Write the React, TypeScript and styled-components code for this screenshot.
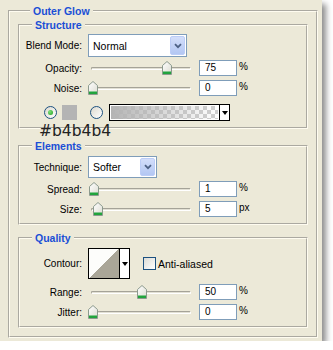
import styled, { createGlobalStyle } from 'styled-components'

const GlobalStyle = createGlobalStyle`
    * {
        margin: 0;
        padding: 0;
        box-sizing: border-box;
    }
    body {
        background: #fff;
        font-family: "Liberation Sans", Arial, sans-serif;
        font-size: 10px;
        color: #000;
    }
`

type SliderProps = { label: string; value: number; unit: string; mt: number }

function Thumb() {
    return (
        <svg width="10" height="14" viewBox="0 0 10 14">
            <defs>
                <linearGradient id="thumbFill" x1="0" y1="0" x2="1" y2="1">
                    <stop offset="0" stopColor="#ffffff" />
                    <stop offset="1" stopColor="#dcdcd2" />
                </linearGradient>
            </defs>
            <path d="M0.5 13.5 V4.5 L5 0.5 L9.5 4.5 V13.5 Z" fill="url(#thumbFill)" stroke="#8c9a8e" />
            <rect x="1" y="10.5" width="8" height="2.5" fill="#21a43d" />
        </svg>
    )
}

function SliderRow({ label, value, unit, mt }: SliderProps) {
    return (
        <Row $mt={mt}>
            <Label>{label}</Label>
            <Slider>
                <Track />
                <ThumbWrap style={{ left: Math.round(value * 0.987) }}>
                    <Thumb />
                </ThumbWrap>
            </Slider>
            <NumberBox>{value}</NumberBox>
            <Unit>{unit}</Unit>
        </Row>
    )
}

function Chevron() {
    return (
        <svg width="8" height="6" viewBox="0 0 8 6">
            <path d="M1 1.2 L4 4.2 L7 1.2" fill="none" stroke="#4d6185" strokeWidth="1.8" />
        </svg>
    )
}

function App() {
    return (
        <>
            <GlobalStyle />
            <Panel>
                <Group $outer>
                    <Legend>Outer Glow</Legend>
                    <Group $mt={7}>
                        <Legend>Structure</Legend>
                        <Body $pt={3} $pb={6}>
                            <Row $mt={0}>
                                <Label>Blend Mode:</Label>
                                <Combo $w={99} $h={23}>
                                    <ComboText>Normal</ComboText>
                                    <ComboButton><Chevron /></ComboButton>
                                </Combo>
                            </Row>
                            <SliderRow label="Opacity:" value={75} unit="%" mt={3} />
                            <SliderRow label="Noise:" value={0} unit="%" mt={4} />
                            <ColorRow>
                                <Radio $checked />
                                <Swatch />
                                <Radio />
                                <GradientBox>
                                    <GradientStrip />
                                    <ArrowPart><Triangle /></ArrowPart>
                                </GradientBox>
                            </ColorRow>
                        </Body>
                    </Group>
                    <Group $mt={16}>
                        <Legend>Elements</Legend>
                        <Body $pt={4} $pb={6}>
                            <Row $mt={0}>
                                <Label>Technique:</Label>
                                <Combo $w={69} $h={22}>
                                    <ComboText>Softer</ComboText>
                                    <ComboButton><Chevron /></ComboButton>
                                </Combo>
                            </Row>
                            <SliderRow label="Spread:" value={1} unit="%" mt={3} />
                            <SliderRow label="Size:" value={5} unit="px" mt={4} />
                        </Body>
                    </Group>
                    <Group $mt={12}>
                        <Legend>Quality</Legend>
                        <Body $pt={4} $pb={6}>
                            <Row $mt={0}>
                                <Label>Contour:</Label>
                                <ContourBox>
                                    <ContourPic />
                                    <ArrowPart><Triangle /></ArrowPart>
                                </ContourBox>
                                <Check />
                                <CheckLabel>Anti-aliased</CheckLabel>
                            </Row>
                            <SliderRow label="Range:" value={50} unit="%" mt={5} />
                            <SliderRow label="Jitter:" value={0} unit="%" mt={4} />
                        </Body>
                    </Group>
                </Group>
                <HexNote>#b4b4b4</HexNote>
            </Panel>
        </>
    )
}
export default App

const Panel = styled.div`
    position: relative;
    width: 322px;
    height: 341px;
    padding: 10px 4px 1px 8px;
    background: #ece9d8;
    box-shadow: 4px 4px 6px rgba(0, 0, 0, 0.45);
`
const Group = styled.div<{ $outer?: boolean; $mt?: number }>`
    display: flex;
    flex-direction: column;
    margin-top: ${(p) => p.$mt || 0}px;
    padding: ${(p) => (p.$outer ? '0 8px 8px 8px' : '0')};
    border: 2px groove rgb(255, 252, 240);
`
const Legend = styled.div`
    align-self: flex-start;
    margin: -7px 0 0 12px;
    padding: 0 3px;
    height: 12px;
    line-height: 12px;
    font-size: 10.5px;
    font-weight: bold;
    color: #1a4fd6;
    background: #ece9d8;
`
const Body = styled.div<{ $pt: number; $pb: number }>`
    display: flex;
    flex-direction: column;
    padding: ${(p) => p.$pt}px 0 ${(p) => p.$pb}px 0;
`
const Row = styled.div<{ $mt: number }>`
    display: flex;
    align-items: center;
    margin-top: ${(p) => p.$mt}px;
`
const Label = styled.div`
    width: 62px;
    margin-right: 6px;
    text-align: right;
    white-space: nowrap;
`
const Combo = styled.div<{ $w: number; $h: number }>`
    display: flex;
    width: ${(p) => p.$w}px;
    height: ${(p) => p.$h}px;
    padding: 1px;
    border: 1px solid #7f9db9;
    background: #fff;
`
const ComboText = styled.div`
    flex: 1;
    display: flex;
    align-items: center;
    padding-left: 3px;
    font-size: 10.5px;
`
const ComboButton = styled.div`
    width: 15px;
    display: flex;
    align-items: center;
    justify-content: center;
    border: 1px solid #bccdf7;
    border-radius: 2px;
    background: linear-gradient(#d3defa, #b3c7f3);
`
const Slider = styled.div`
    position: relative;
    width: 108px;
    height: 16px;
    margin-right: 3px;
`
const Track = styled.div`
    position: absolute;
    left: 3px;
    right: 5px;
    top: 7px;
    height: 3px;
    border-radius: 2px;
    border-top: 1px solid #a5a398;
    border-left: 1px solid #a5a398;
    border-bottom: 1px solid #fff;
    border-right: 1px solid #fff;
    background: #e2e0d4;
`
const ThumbWrap = styled.div`
    position: absolute;
    top: 1px;
    display: flex;
`
const NumberBox = styled.div`
    width: 38px;
    height: 16px;
    padding-left: 5px;
    line-height: 14px;
    border: 1px solid #7f9db9;
    background: #fff;
    margin-right: 2px;
`
const Unit = styled.div`
    line-height: 14px;
    align-self: flex-start;
`
const ColorRow = styled.div`
    display: flex;
    align-items: center;
    height: 17px;
    margin-top: 8px;
    padding-left: 24px;
`
const Radio = styled.div<{ $checked?: boolean }>`
    width: 13px;
    height: 13px;
    border-radius: 50%;
    border: 1px solid #1c5180;
    background: linear-gradient(135deg, #dcd9ce, #ffffff);
    display: flex;
    align-items: center;
    justify-content: center;
    margin-right: ${(p) => (p.$checked ? 5 : 6)}px;
    &::after {
        content: '';
        display: ${(p) => (p.$checked ? 'block' : 'none')};
        width: 5px;
        height: 5px;
        border-radius: 50%;
        background: radial-gradient(circle at 35% 35%, #7de07a, #1f9f1f);
    }
`
const Swatch = styled.div`
    width: 15px;
    height: 15px;
    background: #b4b4b4;
    margin-right: 13px;
`
const GradientBox = styled.div`
    display: flex;
    width: 121px;
    height: 17px;
    border: 1px solid #000;
`
const GradientStrip = styled.div`
    flex: 1;
    border: 1px solid #fff;
    background-image: linear-gradient(to right, #b4b4b4, rgba(180, 180, 180, 0)),
        conic-gradient(#cfcfcf 25%, #fff 0 50%, #cfcfcf 0 75%, #fff 0);
    background-size: 100% 100%, 8px 8px;
`
const ArrowPart = styled.div`
    width: 10px;
    display: flex;
    align-items: center;
    justify-content: center;
    border-left: 1px solid #000;
    background: #fff;
`
const Triangle = styled.div`
    width: 0;
    height: 0;
    border-left: 3px solid transparent;
    border-right: 3px solid transparent;
    border-top: 4px solid #000;
`
const ContourBox = styled.div`
    display: flex;
    width: 42px;
    height: 31px;
    border: 1px solid #000;
    margin-right: 13px;
`
const ContourPic = styled.div`
    flex: 1;
    background: linear-gradient(to top left, #aaa698 50%, #fdfdfb 50%);
`
const Check = styled.div`
    width: 13px;
    height: 13px;
    border: 1px solid #1c5180;
    background: linear-gradient(135deg, #dcdcd6, #ffffff);
    margin-right: 2px;
`
const CheckLabel = styled.div`
    font-size: 10.5px;
`
const HexNote = styled.div`
    position: absolute;
    left: 39px;
    top: 122px;
    font-family: "DejaVu Sans", Verdana, sans-serif;
    font-size: 15.5px;
    line-height: 18px;
    color: #222;
`
